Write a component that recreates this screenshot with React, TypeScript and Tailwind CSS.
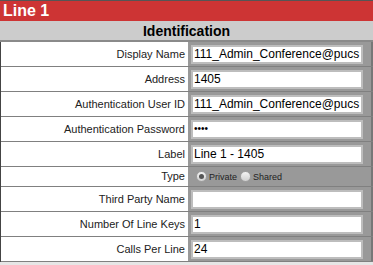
import React from 'react';

const rows: { label: string; value?: string; type?: 'password' | 'radio' }[] = [
  { label: 'Display Name', value: '111_Admin_Conference@pucs' },
  { label: 'Address', value: '1405' },
  { label: 'Authentication User ID', value: '111_Admin_Conference@pucs' },
  { label: 'Authentication Password', value: '••••', type: 'password' },
  { label: 'Label', value: 'Line 1 - 1405' },
  { label: 'Type', type: 'radio' },
  { label: 'Third Party Name', value: '' },
  { label: 'Number Of Line Keys', value: '1' },
  { label: 'Calls Per Line', value: '24' },
];

function Radio({ checked, label }: { checked?: boolean; label: string }) {
  return (
    <span className="flex items-center gap-[2px]">
      <span className="w-[11px] h-[11px] rounded-full bg-gradient-to-b from-[#f4f4f4] to-[#d0d0d0] border border-[#a0a0a0] flex items-center justify-center">
        {checked && <span className="w-[5px] h-[5px] rounded-full bg-[#555]" />}
      </span>
      <span className="text-[9px] text-[#222] mt-[2px]">{label}</span>
    </span>
  );
}

export default function App() {
  return (
    <div className="w-[373px] h-[265px] overflow-hidden bg-[#e6e6e6] font-['Liberation_Sans',Arial,sans-serif]">
      <div className="h-[21px] bg-[#cd3434] border-t border-[#555] flex items-center px-[3px]">
        <span className="text-white font-bold text-[16px] leading-none">Line 1</span>
      </div>
      <div className="h-[21px] bg-[#cccccc] border-b-2 border-[#8a8a8a] flex items-center justify-center">
        <span className="text-black font-bold text-[14px] leading-none">Identification</span>
      </div>
      <div className="flex flex-col border-l border-[#444] bg-white">
        {rows.map((r) => (
          <div
            key={r.label}
            className={`flex border-b border-[#808080] ${r.type === 'radio' ? 'h-[20px]' : 'h-[25px]'}`}
          >
            <div className="w-[187px] shrink-0 flex items-center justify-end pr-[3px] text-[11px] text-[#222]">
              {r.label}
            </div>
            <div className="flex-1 min-w-0 bg-[#999999] flex items-center pl-[3px] pr-[8px] border-r-2 border-[#777]">
              {r.type === 'radio' ? (
                <div className="flex items-center gap-[3px] pl-[5px]">
                  <Radio checked label="Private" />
                  <Radio label="Shared" />
                </div>
              ) : (
                <div className="w-full min-w-0 h-[19px] bg-white border-2 border-[#bdbdbd] flex items-center px-[1px] text-[12px] text-black leading-none whitespace-nowrap overflow-hidden">
                  {r.type === 'password' ? (
                    <span className="text-[10px] leading-none">{r.value}</span>
                  ) : (
                    r.value
                  )}
                </div>
              )}
            </div>
          </div>
        ))}
      </div>
    </div>
  );
}
